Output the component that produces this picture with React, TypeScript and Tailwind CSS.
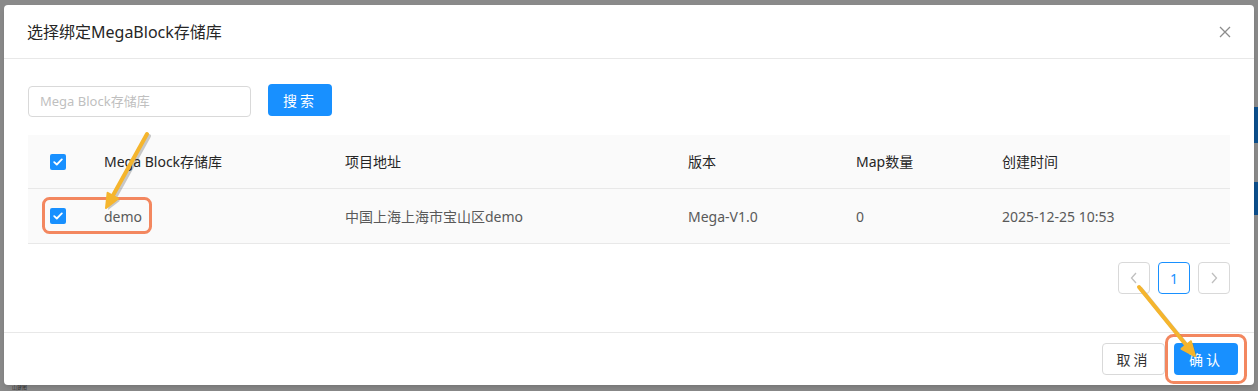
import React from "react";

const font = { fontFamily: '"Noto Sans", "Noto Sans CJK SC", sans-serif' };

function Checkbox() {
  return (
    <span className="flex h-4 w-4 items-center justify-center rounded-[2px] bg-[#1890ff]">
      <svg width="10" height="8" viewBox="0 0 10 8" fill="none">
        <path d="M1.2 4.1L3.8 6.5L8.8 1.4" stroke="white" strokeWidth="1.8" strokeLinecap="round" strokeLinejoin="round" />
      </svg>
    </span>
  );
}

const cols = "grid grid-cols-[60px_241px_343px_168px_146px_1fr] items-center";

export default function App() {
  return (
    <div className="relative h-[391px] w-[1258px] overflow-hidden bg-[#8a8a8a]" style={font}>
      {/* masked page behind the dialog */}
      <div className="absolute left-[12px] top-[385px] text-[5px] leading-none text-[#2d2d2d]">山建图</div>
      <div className="absolute right-0 top-[107px] h-[36px] w-[4px] bg-[#0d4f8c]" />
      <div className="absolute right-0 top-[182px] h-[33px] w-[4px] bg-[#0d4f8c]" />

      <div className="flex h-full w-full pl-[4px] pt-[5px]">
        <div className="relative flex h-[380px] w-[1250px] flex-col rounded-[4px] bg-white shadow-md">
          {/* Header */}
          <div className="flex h-[54px] items-center justify-between border-b border-[#e8e8e8] pl-[23px] pr-[24px]">
            <span className="text-[16px] text-[#262626]">选择绑定MegaBlock存储库</span>
            <svg width="12" height="12" viewBox="0 0 12 12" className="mr-[-1px]">
              <path d="M1 1L11 11M11 1L1 11" stroke="#8c8c8c" strokeWidth="1.3" />
            </svg>
          </div>

          {/* Body */}
          <div className="px-6 pt-[25px]">
            <div className="flex items-start">
              <div className="mt-[2px] flex h-[31px] w-[223px] items-center rounded-[4px] border border-[#d9d9d9] px-[11px] text-[13px] text-[#bfbfbf]">
                Mega Block存储库
              </div>
              <button className="ml-[17px] flex h-[32px] w-[64px] items-center justify-center rounded-[4px] bg-[#1890ff] text-[14px] tracking-[3px] text-white">
                搜索
              </button>
            </div>

            <div className="mt-[18px] text-[14px]">
              <div className={`${cols} h-[54px] border-b border-[#e8e8e8] bg-[#fafafa] text-[#262626]`}>
                <div className="flex justify-center">
                  <Checkbox />
                </div>
                <div className="pl-4">Mega Block存储库</div>
                <div className="pl-4">项目地址</div>
                <div className="pl-4">版本</div>
                <div className="pl-4">Map数量</div>
                <div className="pl-4">创建时间</div>
              </div>
              <div className={`${cols} h-[55px] border-b border-[#e8e8e8] bg-[#fafafa] text-[#595959]`}>
                <div className="flex justify-center">
                  <Checkbox />
                </div>
                <div className="pl-4">demo</div>
                <div className="pl-4">中国上海上海市宝山区demo</div>
                <div className="pl-4">Mega-V1.0</div>
                <div className="pl-4">0</div>
                <div className="pl-4">2025-12-25 10:53</div>
              </div>
            </div>

            {/* Pagination */}
            <div className="mt-[18px] flex justify-end gap-2">
              <div className="flex h-8 w-8 items-center justify-center rounded-[4px] border border-[#d9d9d9]">
                <svg width="8" height="12" viewBox="0 0 8 12">
                  <path d="M6 1L1.5 6L6 11" stroke="#bfbfbf" strokeWidth="1.3" fill="none" />
                </svg>
              </div>
              <div className="flex h-8 w-8 items-center justify-center rounded-[4px] border border-[#1890ff] text-[14px] text-[#1890ff]">
                1
              </div>
              <div className="flex h-8 w-8 items-center justify-center rounded-[4px] border border-[#d9d9d9]">
                <svg width="8" height="12" viewBox="0 0 8 12">
                  <path d="M2 1L6.5 6L2 11" stroke="#bfbfbf" strokeWidth="1.3" fill="none" />
                </svg>
              </div>
            </div>
          </div>

          {/* Footer */}
          <div className="mt-auto flex justify-end gap-[9px] border-t border-[#e8e8e8] px-4 py-[10px]">
            <button className="flex h-8 w-[63px] items-center justify-center rounded-[4px] border border-[#d9d9d9] text-[14px] tracking-[3px] text-[#333]">
              取消
            </button>
            <button className="flex h-8 w-[64px] items-center justify-center rounded-[4px] bg-[#1890ff] text-[14px] tracking-[3px] text-white">
              确认
            </button>
          </div>
        </div>
      </div>

      {/* Annotations */}
      <svg className="pointer-events-none absolute inset-0" width="1258" height="391" viewBox="0 0 1258 391">
        <rect x="43.5" y="198.5" width="107" height="34" rx="6" fill="none" stroke="#f3875f" strokeWidth="3" />
        <rect x="1166.5" y="335.5" width="79" height="47" rx="7" fill="none" stroke="#f3875f" strokeWidth="3" />
        <g opacity="0.25" transform="translate(2 2)">
          <line x1="147" y1="134" x2="112.8" y2="195.8" stroke="#333" strokeWidth="4" strokeLinecap="round" />
          <polygon points="106,208 118,198.7 107.6,192.8" fill="#333" />
          <line x1="1139" y1="287" x2="1186.2" y2="345.1" stroke="#333" strokeWidth="4" strokeLinecap="round" />
          <polygon points="1195,356 1190.9,341.3 1181.5,348.9" fill="#333" />
        </g>
        <line x1="147" y1="134" x2="112.8" y2="195.8" stroke="#f5b52d" strokeWidth="4" strokeLinecap="round" />
        <polygon points="106,208 118,198.7 107.6,192.8" fill="#f5b52d" stroke="#f5b52d" strokeWidth="2" strokeLinejoin="round" />
        <line x1="1139" y1="287" x2="1186.2" y2="345.1" stroke="#f5b52d" strokeWidth="4" strokeLinecap="round" />
        <polygon points="1195,356 1190.9,341.3 1181.5,348.9" fill="#f5b52d" stroke="#f5b52d" strokeWidth="2" strokeLinejoin="round" />
      </svg>
    </div>
  );
}
